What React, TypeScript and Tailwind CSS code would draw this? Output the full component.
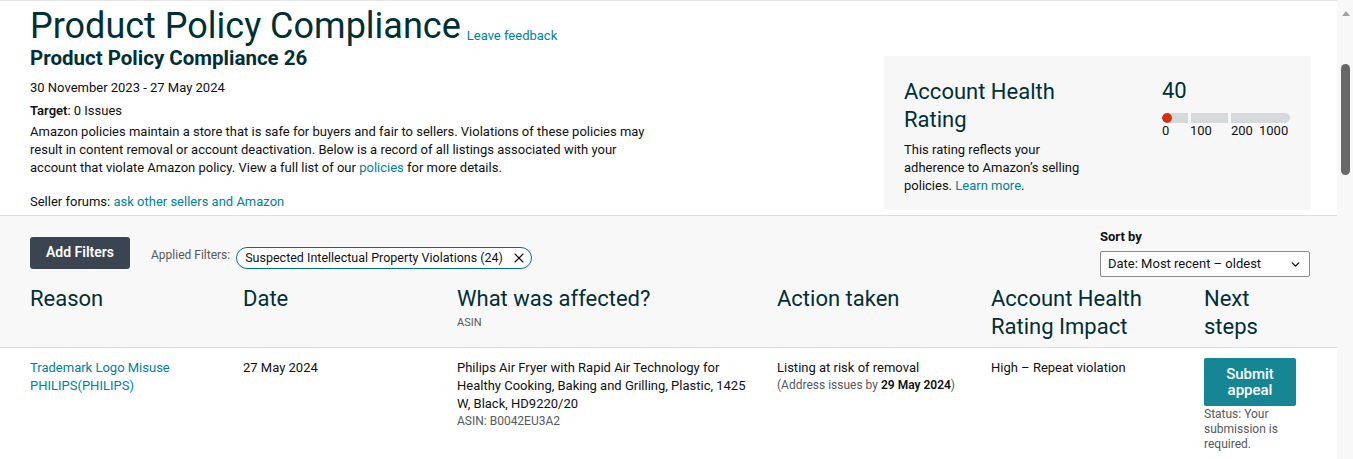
import { X, ChevronDown } from "lucide-react";

const font = "font-['Roboto','Noto_Sans',sans-serif]";

function RatingBar() {
  return (
    <div className="w-[128px]">
      <p className="text-[22px] leading-[26px] text-[#002f36]">40</p>
      <div className="mt-[9px] flex h-[10px] gap-[3px]">
        <div className="relative w-[26px] overflow-hidden rounded-l-full bg-[#d5d9d9]">
          <div className="h-full w-[10px] rounded-full bg-[#d13212]" />
        </div>
        <div className="w-[37px] bg-[#d5d9d9]" />
        <div className="flex-1 rounded-r-full bg-[#d5d9d9]" />
      </div>
      <div className="mt-[-1px] flex text-[13px] leading-[18px] text-[#0f1111]">
        <span className="w-[28px]">0</span>
        <span className="w-[41px]">100</span>
        <span className="w-[28px]">200</span>
        <span>1000</span>
      </div>
    </div>
  );
}

export default function App() {
  return (
    <div className={`flex h-[459px] w-[1353px] overflow-hidden bg-white ${font}`}>
      <main className="w-[1337px] border-t border-[#e3e6e6]">
        <section className="flex justify-between pl-[30px] pr-[26px]">
          <div className="w-[640px] text-[13px] leading-[18px] text-[#0f1111]">
            <div className="flex items-end gap-[6px] pt-[4px]">
              <h1 className="text-[36px] leading-[42px] text-[#002f36]">
                Product Policy Compliance
              </h1>
              <a className="pb-[2px] text-[13px] text-[#008296]">Leave feedback</a>
            </div>
            <h2 className="mt-[-2px] text-[20.5px] font-bold leading-[26px] text-[#002f36]">
              Product Policy Compliance 26
            </h2>
            <p className="mt-[8px]">30 November 2023 - 27 May 2024</p>
            <p className="mt-[5px]">
              <b className="font-semibold">Target</b>: 0 Issues
            </p>
            <p className="mt-[3px] w-[630px]">
              Amazon policies maintain a store that is safe for buyers and fair to
              sellers. Violations of these policies may result in content removal or
              account deactivation. Below is a record of all listings associated
              with your account that violate Amazon policy. View a full list of our{" "}
              <a className="text-[#008296]">policies</a> for more details.
            </p>
            <p className="mt-[16px]">
              Seller forums:{" "}
              <a className="text-[#008296]">ask other sellers and Amazon</a>
            </p>
          </div>
          <div className="mt-[55px] flex h-[154px] w-[427px] justify-between bg-[#f7f7f7] pl-[20px] pr-[21px] pt-[22px]">
            <div className="w-[210px]">
              <h3 className="text-[22px] leading-[28px] text-[#002f36]">
                Account Health Rating
              </h3>
              <p className="mt-[7px] w-[188px] text-[13px] leading-[18px] text-[#0f1111]">
                This rating reflects your adherence to Amazon’s selling policies.{" "}
                <a className="text-[#008296]">Learn more</a>.
              </p>
            </div>
            <RatingBar />
          </div>
        </section>

        <section className="mt-[4px] h-[133px] border-y border-[#dddddd] bg-[#f8f8f8] pl-[30px] pr-[27px]">
          <div className="flex items-start justify-between pt-[20px]">
            <div className="flex items-center">
              <button className="h-[32px] w-[100px] rounded-[3px] bg-[#3b4451] text-[14px] font-semibold text-white">
                Add Filters
              </button>
              <span className="ml-[21px] mr-[6px] mt-[4px] text-[12px] text-[#565959]">
                Applied Filters:
              </span>
              <span className="mt-[11px] flex h-[22px] items-center gap-[8px] rounded-full border border-[#007185] bg-white pl-[8px] pr-[4px] text-[12.5px] text-[#0f1111]">
                Suspected Intellectual Property Violations (24)
                <X size={16} strokeWidth={1.75} />
              </span>
            </div>
            <div className="mt-[-8px] w-[210px]">
              <p className="text-[13px] font-bold leading-[18px] text-[#0f1111]">Sort by</p>
              <div className="mt-[5px] flex h-[26px] items-center justify-between rounded-[2px] border border-[#888c8c] bg-white pl-[7px] pr-[7px] text-[13px] text-[#0f1111]">
                Date: Most recent – oldest
                <ChevronDown size={13} strokeWidth={2.5} />
              </div>
            </div>
          </div>
          <div className="mt-[8px] grid grid-cols-[213px_214px_320px_214px_213px_1fr] text-[22px] leading-[28px] text-[#002f36]">
            <div>Reason</div>
            <div>Date</div>
            <div>
              What was affected?
              <p className="mt-[3px] text-[11px] leading-[14px] text-[#565959]">ASIN</p>
            </div>
            <div>Action taken</div>
            <div className="pr-[20px]">Account Health Rating Impact</div>
            <div className="w-[70px]">Next steps</div>
          </div>
        </section>

        <section className="grid grid-cols-[213px_214px_320px_214px_213px_1fr] pl-[30px] pt-[10px] text-[13px] leading-[18px] text-[#0f1111]">
          <div className="pt-[1px] text-[#008296]">
            Trademark Logo Misuse
            <br />
            PHILIPS(PHILIPS)
          </div>
          <div className="pt-[1px]">27 May 2024</div>
          <div className="pr-[20px] pt-[1px]">
            Philips Air Fryer with Rapid Air Technology for Healthy Cooking, Baking
            and Grilling, Plastic, 1425 W, Black, HD9220/20
            <p className="text-[12px] leading-[16px] text-[#565959]">ASIN: B0042EU3A2</p>
          </div>
          <div className="pt-[1px]">
            Listing at risk of removal
            <p className="text-[12px] leading-[16px] text-[#565959]">
              (Address issues by <b className="font-semibold text-[#0f1111]">29 May 2024</b>)
            </p>
          </div>
          <div className="pt-[1px]">High – Repeat violation</div>
          <div>
            <button className="h-[48px] w-[92px] rounded-[2px] bg-[#178694] text-[15px] font-medium leading-[16px] text-white">
              Submit
              <br />
              appeal
            </button>
            <p className="mt-[1px] w-[80px] text-[12px] leading-[15px] text-[#565959]">
              Status: Your submission is required.
            </p>
          </div>
        </section>
      </main>
      <aside className="relative w-[16px] bg-[#f8f8f8]">
        <div className="absolute left-[5px] top-[11px] h-0 w-0 border-x-[4px] border-b-[5px] border-x-transparent border-b-[#a3a3a3]" />
        <div className="absolute left-[4px] top-[64px] h-[111px] w-[9px] rounded-full bg-[#686868]" />
      </aside>
    </div>
  );
}
